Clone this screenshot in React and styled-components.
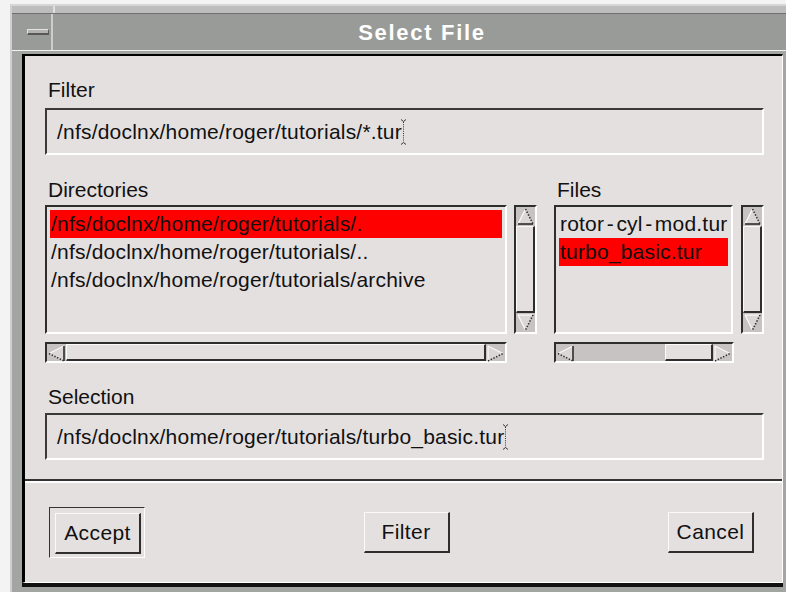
import React from "react";
import styled, { createGlobalStyle } from "styled-components";

const LIGHT = "#fafafa";
const DARK = "#2e2e2e";
const FACE = "#e5e0e0";
const TROUGH = "#c8c3c3";

const GlobalStyle = createGlobalStyle`
  html, body {
    margin: 0;
    padding: 0;
    background: #f3f3f3;
  }
  body {
    font-family: "Liberation Sans", Arial, sans-serif;
    overflow: hidden;
  }
`;

const Window = styled.div`
  margin: 4px 0 0 10px;
  width: 776px;
  height: 588px;
  box-sizing: border-box;
  background: #a3a5a3;
  border-left: 2px solid #cfcfcf;
  border-top: 2px solid #d6d6d6;
  display: flex;
  flex-direction: column;
  overflow: hidden;
`;

const TopStrip = styled.div`
  height: 7px;
  background: #bdbdbd;
  border-bottom: 1px solid #6f6f6f;
  display: flex;
`;

const Corner = styled.div`
  width: 41px;
  border-right: 2px solid #e0e0e0;
`;

const TitleBar = styled.div`
  height: 36px;
  background: #999b98;
  border-bottom: 1px solid #f2f2f2;
  display: flex;
  align-items: center;
`;

const MinCell = styled.div`
  width: 41px;
  height: 100%;
  border-right: 2px solid #cdcdcd;
  display: flex;
  align-items: center;
  padding-left: 15px;
  box-sizing: border-box;
`;

const MinBar = styled.div`
  width: 22px;
  height: 6px;
  box-sizing: border-box;
  background: #b2b3b1;
  border-top: 1px solid #e2e2e2;
  border-left: 1px solid #e2e2e2;
  border-bottom: 2px solid #585858;
  border-right: 1px solid #585858;
`;

const Title = styled.div`
  flex: 1;
  text-align: center;
  padding: 2px 0 0 5px;
  color: #fff;
  font-weight: 700;
  font-size: 22px;
  letter-spacing: 1.7px;
`;

const Body = styled.div`
  padding: 3px 3px 0 10px;
`;

const Panel = styled.div`
  height: 529px;
  box-sizing: border-box;
  background: ${FACE};
  border-top: 2px solid #000;
  border-left: 3px solid #000;
  border-right: 1px solid #fff;
  border-bottom: 1px solid #fff;
  box-shadow: 0 4px 0 #111;
  display: flex;
  flex-direction: column;
`;

const Form = styled.div`
  padding: 22px 18px 19px 20px;
  display: flex;
  flex-direction: column;
`;

const Label = styled.div`
  font-size: 21px;
  line-height: 24px;
  padding-left: 3px;
  color: #111;
  margin-top: ${({ $top }) => $top || 0}px;
`;

const Field = styled.div`
  margin-top: ${({ $top }) => $top}px;
  height: 47px;
  box-sizing: border-box;
  border-top: 2px solid #3a3a3a;
  border-left: 2px solid #3a3a3a;
  border-bottom: 2px solid #fff;
  border-right: 2px solid #fff;
  padding-left: 10px;
  display: flex;
  align-items: center;
  font-size: 21px;
  letter-spacing: 0.2px;
  color: #111;
  white-space: nowrap;
`;

const Browse = styled.div`
  display: flex;
  margin-top: 23px;
  gap: 17px;
`;

const Pane = styled.div`
  width: ${({ $w }) => $w}px;
  display: flex;
  flex-direction: column;
`;

const ListRow = styled.div`
  display: flex;
  margin-top: 3px;
  gap: ${({ $gap }) => $gap}px;
`;

const List = styled.div`
  width: ${({ $w }) => $w}px;
  height: 129px;
  box-sizing: border-box;
  border-top: 2px solid ${DARK};
  border-left: 2px solid ${DARK};
  border-bottom: 2px solid #fff;
  border-right: 2px solid #fff;
  padding: 3px;
  overflow: hidden;
`;

const Item = styled.div`
  height: 28px;
  display: flex;
  align-items: center;
  padding-left: 1px;
  white-space: nowrap;
  font-size: 21px;
  letter-spacing: 0.2px;
  color: #111;
  background: ${({ $selected }) => ($selected ? "#ff0000" : "transparent")};
`;

const Dash = styled.span`
  margin: 0 2.5px;
`;

const Trough = styled.div`
  box-sizing: border-box;
  background: ${TROUGH};
  border-top: 2px solid ${DARK};
  border-left: 2px solid ${DARK};
  border-bottom: 2px solid #fff;
  border-right: 2px solid #fff;
  display: flex;
`;

const VScroll = styled(Trough)`
  width: 23px;
  height: 129px;
  flex-direction: column;
`;

const HScroll = styled(Trough)`
  width: ${({ $w }) => $w}px;
  height: 21px;
  margin-top: 8px;
`;

const Track = styled.div`
  flex: 1;
  display: flex;
  flex-direction: ${({ $vertical }) => ($vertical ? "column" : "row")};
`;

const Gap = styled.div`
  width: ${({ $w }) => $w}px;
`;

const Thumb = styled.div`
  flex: 1;
  box-sizing: border-box;
  background: ${FACE};
  border-top: 1px solid ${LIGHT};
  border-left: 1px solid ${LIGHT};
  border-bottom: 2px solid ${DARK};
  border-right: 2px solid ${DARK};
`;

const ArrowCell = styled.svg`
  flex: none;
  display: block;
`;

const Separator = styled.div`
  border-top: 2px solid #333;
  border-bottom: 2px solid #fff;
`;

const ButtonBar = styled.div`
  flex: 1;
  display: flex;
  align-items: center;
  justify-content: space-between;
  padding: 0 28px 0 24px;
`;

const DefaultFrame = styled.div`
  padding: 5px 3px 3px 5px;
  border-top: 1px solid #333;
  border-left: 1px solid #333;
  border-bottom: 1px solid #fff;
  border-right: 1px solid #fff;
`;

const Button = styled.button`
  width: 86px;
  height: 41px;
  box-sizing: border-box;
  margin: 0;
  padding: 0;
  background: ${FACE};
  border-top: 1px solid ${LIGHT};
  border-left: 1px solid ${LIGHT};
  border-bottom: 2px solid ${DARK};
  border-right: 2px solid ${DARK};
  font-family: "Liberation Sans", Arial, sans-serif;
  font-size: 21px;
  letter-spacing: 0.4px;
  color: #111;
`;

const Caret = styled.svg`
  display: block;
  margin-left: -2px;
  flex: none;
`;

// shaded triangle for the scroll arrows: light edges, dark edges, and the dotted slant
const arrows = {
  up: {
    fill: "9.5,2 17,17 2,17",
    light: [[2, 17, 9.5, 2]],
    dark: [[2, 17, 17, 17]],
    dots: [[9.5, 2, 17, 17]],
  },
  down: {
    fill: "2,2 17,2 9.5,17",
    light: [[2, 2, 17, 2], [2, 2, 9.5, 17]],
    dark: [],
    dots: [[17, 2, 9.5, 17]],
  },
  left: {
    fill: "2,9.5 17,2 17,17",
    light: [[2, 9.5, 17, 2]],
    dark: [[17, 2, 17, 17]],
    dots: [[2, 9.5, 17, 17]],
  },
  right: {
    fill: "17,9.5 2,2 2,17",
    light: [[2, 2, 2, 17], [2, 2, 17, 9.5]],
    dark: [],
    dots: [[2, 17, 17, 9.5]],
  },
};

const Arrow = ({ dir }) => {
  const a = arrows[dir];
  return (
    <ArrowCell width="19" height="19" viewBox="0 0 19 19">
      <polygon points={a.fill} fill="#dcd7d7" />
      {a.light.map(([x1, y1, x2, y2], i) => (
        <line key={"l" + i} x1={x1} y1={y1} x2={x2} y2={y2} stroke={LIGHT} strokeWidth="1.2" />
      ))}
      {a.dark.map(([x1, y1, x2, y2], i) => (
        <line key={"d" + i} x1={x1} y1={y1} x2={x2} y2={y2} stroke={DARK} strokeWidth="1.6" />
      ))}
      {a.dots.map(([x1, y1, x2, y2], i) => (
        <line
          key={"s" + i}
          x1={x1}
          y1={y1}
          x2={x2}
          y2={y2}
          stroke={DARK}
          strokeWidth="1.6"
          strokeDasharray="1.4 1.6"
        />
      ))}
    </ArrowCell>
  );
};

const TextCursor = () => (
  <Caret width="7" height="26" viewBox="0 0 7 26">
    <g stroke="#333" strokeWidth="1" fill="none">
      <path d="M1 0.5 L3.5 2.5 L6 0.5" />
      <line x1="3.5" y1="3" x2="3.5" y2="23" strokeDasharray="1 1.2" />
      <path d="M1 25.5 L3.5 23.5 L6 25.5" />
    </g>
  </Caret>
);

const VerticalBar = () => (
  <VScroll>
    <Arrow dir="up" />
    <Track $vertical>
      <Thumb />
    </Track>
    <Arrow dir="down" />
  </VScroll>
);

const HorizontalBar = ({ width, lead }) => (
  <HScroll $w={width}>
    <Arrow dir="left" />
    <Track>
      {lead ? <Gap $w={lead} /> : null}
      <Thumb />
    </Track>
    <Arrow dir="right" />
  </HScroll>
);

const directories = [
  "/nfs/doclnx/home/roger/tutorials/.",
  "/nfs/doclnx/home/roger/tutorials/..",
  "/nfs/doclnx/home/roger/tutorials/archive",
];

const files = [
  {
    name: (
      <>
        rotor<Dash>-</Dash>cyl<Dash>-</Dash>mod.tur
      </>
    ),
  },
  { name: "turbo_basic.tur", selected: true },
];

const App = () => (
  <>
    <GlobalStyle />
    <Window>
      <TopStrip>
        <Corner />
      </TopStrip>
      <TitleBar>
        <MinCell>
          <MinBar />
        </MinCell>
        <Title>Select File</Title>
      </TitleBar>
      <Body>
        <Panel>
          <Form>
            <Label>Filter</Label>
            <Field $top={6}>
              /nfs/doclnx/home/roger/tutorials/*.tur
              <TextCursor />
            </Field>

            <Browse>
              <Pane $w={492}>
                <Label>Directories</Label>
                <ListRow $gap={7}>
                  <List $w={462}>
                    {directories.map((d, i) => (
                      <Item key={d} $selected={i === 0}>
                        {d}
                      </Item>
                    ))}
                  </List>
                  <VerticalBar />
                </ListRow>
                <HorizontalBar width={462} />
              </Pane>
              <Pane $w={210}>
                <Label>Files</Label>
                <ListRow $gap={8}>
                  <List $w={180}>
                    {files.map((f, i) => (
                      <Item key={i} $selected={f.selected}>
                        {f.name}
                      </Item>
                    ))}
                  </List>
                  <VerticalBar />
                </ListRow>
                <HorizontalBar width={180} lead={90} />
              </Pane>
            </Browse>

            <Label $top={22}>Selection</Label>
            <Field $top={4}>
              /nfs/doclnx/home/roger/tutorials/turbo_basic.tur
              <TextCursor />
            </Field>
          </Form>
          <Separator />
          <ButtonBar>
            <DefaultFrame>
              <Button>Accept</Button>
            </DefaultFrame>
            <Button>Filter</Button>
            <Button>Cancel</Button>
          </ButtonBar>
        </Panel>
      </Body>
    </Window>
  </>
);

export default App;
